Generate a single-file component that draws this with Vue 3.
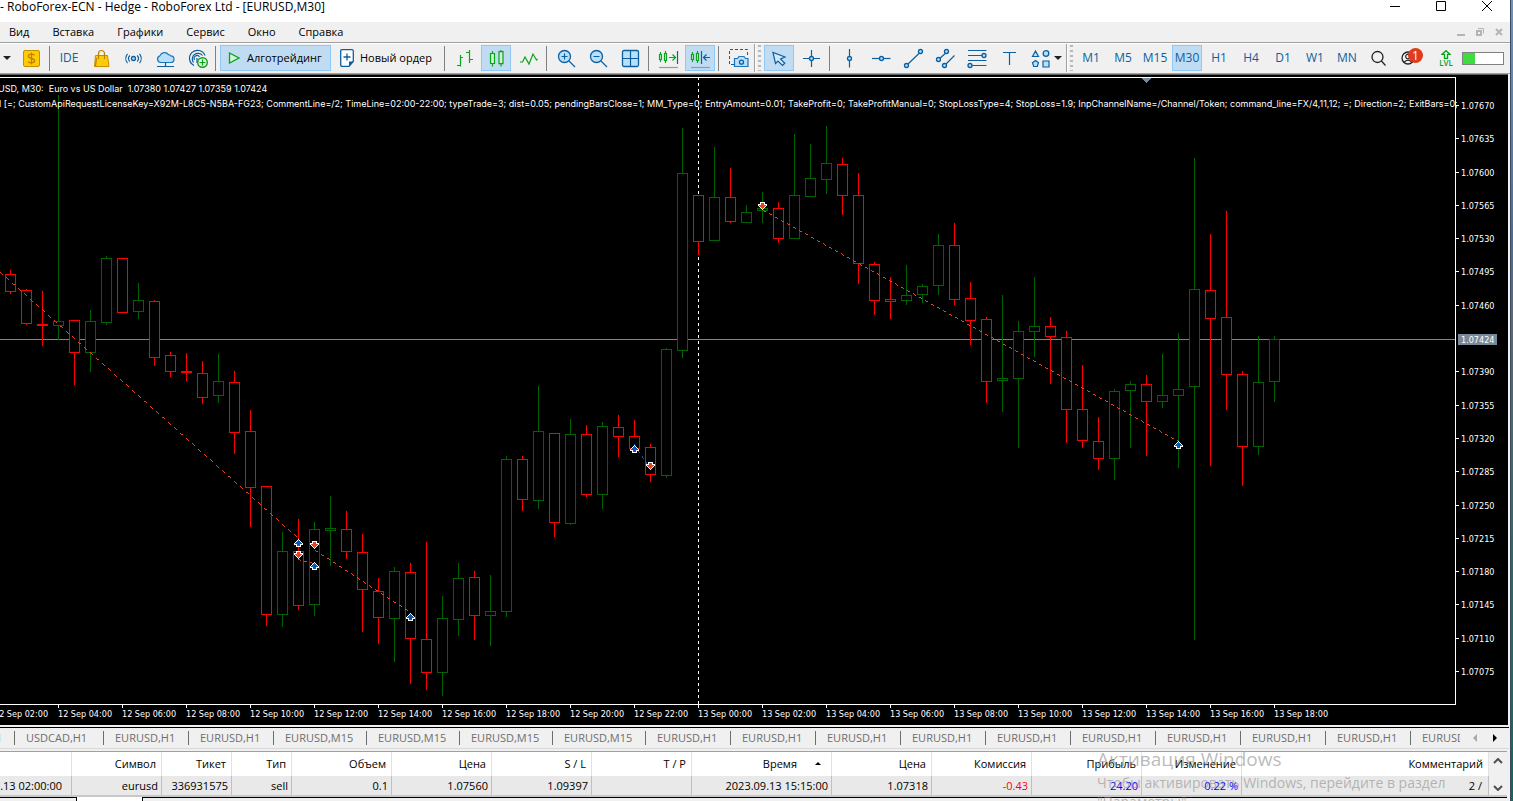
<script setup>
const menus = ['Вид', 'Вставка', 'Графики', 'Сервис', 'Окно', 'Справка']
const frames = ['M1', 'M5', 'M15', 'M30', 'H1', 'H4', 'D1', 'W1', 'MN']

const B = '#0d5f9e'
const L = '#b9e0fa'
const G = '#0aa31c'
const line = (d, c = B, f = 'none') => `<path d="${d}" fill="${f}" stroke="${c}" stroke-width="1.2"/>`
const dot = (x, y, r = 2) => `<circle cx="${x}" cy="${y}" r="${r}" fill="${L}" stroke="${B}" stroke-width="1.3"/>`

const icons = {
  dollar: `<rect x="4.5" y="4.5" width="16" height="16" rx="1.5" fill="#ffcb05" stroke="#c78f00"/><path d="M15.5 9.2C14.6 8.5 13.6 8.2 12.4 8.2c-1.8 0-3 .8-3 2 0 2.900 6.200 1.600 6.200 4.500 0 1.300-1.300 2.100-3.200 2.100-1.300 0-2.500-.4-3.300-1.100M12.500 6.500v12" fill="none" stroke="#b98200" stroke-width="1.300"/>`,
  bag: `<path d="M6.500 9.500H18.500L20 20.500H5.500z" fill="#ffcb05" stroke="#c78f00"/><path d="M9.500 13V7.500a3 3 0 0 1 6 0V13M7.500 12l-1 8" fill="none" stroke="#b98200" stroke-width="1.200"/>`,
  signal: dot(12.5, 12.5, 2) + line('M8.800 9.500a4.500 4.500 0 0 0 0 6M16.200 9.500a4.500 4.500 0 0 1 0 6M6.500 7.800a7.500 7.500 0 0 0 0 9.400M18.500 7.800a7.500 7.500 0 0 1 0 9.400'),
  cloud: line('M8 16.500H17.500a3.300 3.300 0 0 0 .3-6.600 3 3 0 0 0-2.300-1.300A5 5 0 0 0 6.800 9.900 3.400 3.400 0 0 0 8 16.500z', '#1b76b8', L) + line('M12.500 16.500v4M4 20.500h17'),
  cast: line('M9 19.500A8 8 0 1 1 20 9.500M8.500 16.500A5.300 5.300 0 1 1 17.500 9.500M9.500 14A2.800 2.800 0 1 1 14.500 11M12 12v5', B) + `<circle cx="17.500" cy="16.500" r="4.800" fill="#e4f8e4" stroke="${G}" stroke-width="1.400"/>` + line('M17.500 13.500v6M14.500 16.500h6', G),
  bars: line('M8.500 9v11.500M8.500 11.500h2.500M5 19.500h3.500M17.500 4v13M14 6.500h3.500M17.500 13.500h3.500', G),
  candles: line('M8.500 5v3M8.500 17v3.500M17 4v2M17 17.500v3', G) + line('M6.500 7.500h4v10h-4zM15 5.700h4v12h-4z', G, '#cdf3cf'),
  wave: line('M4 16h2.500L9 11l4 7 4-10 3.500 6 1-1', G),
  zoomIn: `<circle cx="10.500" cy="10.500" r="6" fill="${L}" stroke="${B}" stroke-width="1.300"/>` + line('M15 15l6 6M7.500 10.500h6M10.500 7.500v6'),
  zoomOut: `<circle cx="10.500" cy="10.500" r="6" fill="${L}" stroke="${B}" stroke-width="1.300"/>` + line('M15 15l6 6M7.500 10.500h6'),
  grid: `<rect x="4.500" y="4.500" width="16" height="16" rx="1.500" fill="${L}" stroke="${B}" stroke-width="1.300"/>` + line('M12.500 4.500v16M4.500 12.500h16'),
  shift: line('M4.500 6v10M9.500 5v12', G) + line('M3.500 8.500h2v5h-2zM8.500 7.500h2v7h-2z', G, '#cdf3cf') + line('M13 11.500h6M16.500 8.500l3 3-3 3', G) + line('M21.500 5v13') + line('M3 21.500h19', '#9a9a9a'),
  scroll: line('M4.500 6v10M9.500 5v12', G) + line('M3.500 8.500h2v5h-2zM8.500 7.500h2v7h-2z', G, '#cdf3cf') + line('M13.500 5v13') + line('M22 11.500h-6M18.500 8.500l-3 3 3 3') + line('M3 21.500h19', '#9a9a9a'),
  camera: `<path d="M8 18.500H3.500V3.500h18V10" fill="none" stroke="${B}" stroke-dasharray="3 2"/>` + line('M8.500 20.500v-8h3l1.500-2h5l1.500 2h2.500v8z', '#1b76b8', L) + dot(15.5, 16.2, 2),
  pointer: line('M6 6.500l2.500 11 2.500-2.500 4.500 4.500 2.300-2.300L13.500 13l4.500-2z', B, '#d4eafa'),
  cross: line('M12.500 4v17M4 12.500h17') + dot(12.5, 12.5),
  vline: line('M12.500 3v18.500') + dot(12.5, 12.5),
  hline: line('M3 12.500h18.500') + dot(12.5, 12.5),
  trend: line('M6 19L19.500 6') + dot(5.5, 19.5) + dot(19.5, 5.500),
  channel: line('M5.500 13.500l9-8M11.500 19.500l10-10') + dot(5.500, 13.500) + dot(13.500, 5.500) + dot(11.500, 19.500),
  fibo: line('M3 4.500h18.500M3 9.500h15M3 14.500h18.500M5 19.500h16.500') + dot(19, 9.500) + dot(5, 19.500),
  text: line('M6 6.500h13M12.500 6.500v12.500'),
  shapes: line('M7.500 5l3 5.500H4.500zM15 15h6v6h-6zM7.500 14.500l3 2.300-1.200 3.700H5.700L4.500 16.800z', B, L) + dot(18, 7.500, 2.800),
  search: `<circle cx="10.500" cy="11" r="5.500" fill="none" stroke="#222" stroke-width="1.300"/>` + line('M14.500 15l4 4.500', '#222'),
}

const groupA = [
  { sep: true },
  { label: 'IDE' },
  { icon: 'bag', name: 'Маркет' },
  { icon: 'signal', name: 'Сигналы' },
  { icon: 'cloud', name: 'VPS' },
  { icon: 'cast', name: 'Подписка' },
  { sep: true },
]
const groupB = [
  { sep: true },
  { icon: 'bars', name: 'Бары' },
  { icon: 'candles', name: 'Свечи', on: true },
  { icon: 'wave', name: 'Линия' },
  { sep: true },
  { icon: 'zoomIn', name: 'Увеличить' },
  { icon: 'zoomOut', name: 'Уменьшить' },
  { icon: 'grid', name: 'Упорядочить' },
  { sep: true },
  { icon: 'shift', name: 'Сдвиг' },
  { icon: 'scroll', name: 'Автопрокрутка', on: true },
  { sep: true },
  { icon: 'camera', name: 'Снимок' },
]
const groupC = [
  { icon: 'pointer', name: 'Курсор', on: true },
  { icon: 'cross', name: 'Перекрестие' },
  { sep: true },
  { icon: 'vline', name: 'Вертикальная линия' },
  { icon: 'hline', name: 'Горизонтальная линия' },
  { icon: 'trend', name: 'Трендовая линия' },
  { icon: 'channel', name: 'Канал' },
  { icon: 'fibo', name: 'Фибоначчи' },
  { icon: 'text', name: 'Текст' },
]

// high, body top, body bottom, low; u = rising, d = falling
const candleRows = `d270 274 292 294|d289 290 324 325|d291 324 326 346|u95 321 326 340|d320 320 353 385|u310 321 353 372|u256 258 323 325|d258 258 313 313|u283 300 312 319|d300 301 358 366|d352 355 372 377|d353 371 373 381|d361 373 398 404|u354 381 396 403|d371 382 433 454|d410 431 488 527|d486 486 615 626|u532 551 615 627|d519 551 606 610|u522 529 605 616|u496 528 531 566|d511 529 552 559|d534 552 590 632|d578 591 618 644|u567 571 619 662|d563 572 639 684|d542 639 673 690|u596 618 673 696|u563 578 620 636|d571 577 616 640|u575 611 616 646|u456 459 612 617|d456 459 500 511|u386 431 501 509|d433 433 523 537|u419 434 524 525|d425 434 495 497|u422 426 495 509|d415 427 437 457|d420 436 449 449|d444 447 475 482|u348 349 476 478|u128 173 351 358|d195 195 242 255|u147 197 241 241|d168 197 222 223|u205 212 223 223|u192 208 211 223|d202 208 239 243|u134 195 239 239|u144 178 197 197|u126 163 180 194|d158 164 196 215|d173 195 264 284|d262 264 301 315|d277 299 302 319|u265 295 301 305|u284 286 295 303|u234 245 286 295|d223 245 300 305|d282 298 321 345|d317 319 382 403|u295 378 381 412|u321 331 379 448|u277 326 332 357|d317 326 337 384|d331 337 410 443|d365 409 441 448|d417 441 459 470|u389 391 459 480|u381 384 391 448|d375 384 402 456|u354 395 402 408|u333 389 396 468|u158 289 387 640|d234 290 319 466|d211 317 375 410|d371 374 447 486|u336 382 447 455|u336 339 382 402`
const candles = candleRows.split('|').map((row, i) => {
  const [high, top, bottom, low] = row.slice(1).split(' ').map(Number)
  return { x: 10 + 16 * i, high, top, bottom, low, color: row[0] === 'u' ? '#006400' : '#ff0000' }
})

const dashes = (x0, y0, x1, y1) => {
  const dx = x1 - x0
  const dy = y1 - y0
  const n = Math.max(Math.abs(dx), Math.abs(dy))
  let d = ''
  for (let i = 0; i <= n; i++) {
    if (i % 6 < 3) d += `M${Math.round(x0 + (dx * i) / n)} ${Math.round(y0 + (dy * i) / n)}h1v1h-1z`
  }
  return d
}
const trades = [
  { d: dashes(0, 272, 298, 538), c: '#e8451e' },
  { d: dashes(298, 559, 314, 563), c: '#e8451e' },
  { d: dashes(315, 550, 410, 612), c: '#e8451e' },
  { d: dashes(634, 444, 650, 469), c: '#0a5cae' },
  { d: dashes(763, 210, 1178, 441), c: '#e8451e' },
]

const outer = [1, 3, 5, 7, 9, 9, 5, 5]
const inner = [0, 1, 3, 5, 7, 3, 3, 0]
const rows = (widths, x, y, down) =>
  (down ? [...widths].reverse() : widths)
    .map((w, i) => (w ? `M${x - (w - 1) / 2} ${y + i}h${w}v1h${-w}z` : ''))
    .join('')
const arrows = [
  [298, 539, 0], [298, 551, 1], [314, 541, 1], [314, 562, 0], [410, 613, 0],
  [634, 445, 0], [650, 462, 1], [762, 202, 1], [1178, 441, 0],
].map(([x, y, down]) => ({ o: rows(outer, x, y, down), i: rows(inner, x, y, down), c: down ? '#e8451e' : '#0a5cae' }))

const prices = Array.from({ length: 18 }, (_, i) => ({
  y: Math.round(105 + (i * 566) / 17),
  t: (1.0767 - i * 0.00035).toFixed(5),
})).filter((_, i) => i !== 7)

const times = Array.from({ length: 21 }, (_, i) => {
  const h = 2 + 2 * i
  return { x: -6 + 64 * i, t: `${12 + Math.floor(h / 24)} Sep ${String(h % 24).padStart(2, '0')}:00` }
})

const params = 'l [=; CustomApiRequestLicenseKey=X92M-L8C5-N5BA-FG23; CommentLine=/2; TimeLine=02:00-22:00; typeTrade=3; dist=0.05; pendingBarsClose=1; MM_Type=0; EntryAmount=0.01; TakeProfit=0; TakeProfitManual=0; StopLossType=4; StopLoss=1.9; InpChannelName=/Channel/Token; command_line=FX/4,11,12; =; Direction=2; ExitBars=0;'

const tabs = [
  'USDCAD,H1', 'EURUSD,H1', 'EURUSD,H1', 'EURUSD,M15', 'EURUSD,M15', 'EURUSD,M15', 'EURUSD,M15',
  'EURUSD,H1', 'EURUSD,H1', 'EURUSD,H1', 'EURUSD,H1', 'EURUSD,H1', 'EURUSD,H1', 'EURUSD,H1', 'EURUSD,H1', 'EURUSD,H1', 'EURUSD,H1',
].map((t) => ({ t, size: t.endsWith('M15') ? 'wide' : t.startsWith('USD') ? 'mid' : 'norm' }))

const columns = [
  { w: 'c72', h: '', v: '2023.09.13 02:00:00', k: 'open' },
  { w: 'c90', h: 'Символ', v: 'eurusd' },
  { w: 'c70', h: 'Тикет', v: '336931575' },
  { w: 'c60', h: 'Тип', v: 'sell' },
  { w: 'c100', h: 'Объем', v: '0.1' },
  { w: 'c100', h: 'Цена', v: '1.07560' },
  { w: 'c100', h: 'S / L', v: '1.09397' },
  { w: 'c100', h: 'T / P', v: '' },
  { w: 'c140', h: 'Время', v: '2023.09.13 15:15:00', sort: true },
  { w: 'c100', h: 'Цена', v: '1.07318' },
  { w: 'c100', h: 'Комиссия', v: '-0.43', k: 'red' },
  { w: 'c110', h: 'Прибыль', v: '24.20', k: 'blue' },
  { w: 'c100', h: 'Изменение', v: '0.22 %', k: 'blue' },
  { w: 'cauto', h: 'Комментарий', v: '2 /', k: 'last' },
]
</script>

<template>
  <div class="screen">
    <div class="window">
      <header class="titlebar">
        <h1>- RoboForex-ECN - Hedge - RoboForex Ltd - [EURUSD,M30]</h1>
        <div class="winctl">
          <button aria-label="Свернуть"><svg width="12" height="12"><path d="M1 6.500h10" /></svg></button>
          <button aria-label="Развернуть"><svg width="12" height="12"><path d="M1.500 1.500h9v9h-9z" /></svg></button>
          <button aria-label="Закрыть"><svg width="12" height="12"><path d="M1 1l10 10M11 1L1 11" /></svg></button>
        </div>
      </header>

      <nav class="menubar">
        <button v-for="m in menus" :key="m">{{ m }}</button>
        <div class="mdictl">
          <button aria-label="Свернуть график"><svg width="10" height="10"><path d="M1 8h8" stroke-width="2" /></svg></button>
          <button aria-label="Восстановить график"><svg width="10" height="10"><path d="M2 4h4v4H2z" stroke-width="2" /><path d="M3 1.500h5.500v5" /></svg></button>
          <button aria-label="Закрыть график"><svg width="10" height="10"><path d="M2 2l6 6M8 2L2 8" stroke-width="2" /></svg></button>
        </div>
      </nav>

      <div class="toolbar">
        <div class="group first">
          <button class="drop" aria-label="Меню"><i class="caret"></i></button>
          <button class="tool" aria-label="Депозит"><svg viewBox="0 0 24 24" v-html="icons.dollar"></svg></button>
          <template v-for="(t, i) in groupA" :key="i">
            <i v-if="t.sep" class="sep"></i>
            <button v-else-if="t.label" class="tool word">{{ t.label }}</button>
            <button v-else class="tool" :aria-label="t.name"><svg viewBox="0 0 24 24" v-html="icons[t.icon]"></svg></button>
          </template>
          <button class="algo on">
            <svg viewBox="0 0 12 12"><path d="M1.500 1l9.500 5-9.500 5z" fill="#d3f5d5" stroke="#0aa31c" stroke-width="1.300" /></svg>
            Алготрейдинг
          </button>
          <button class="order">
            <svg viewBox="0 0 14 18"><path d="M2 .7h10q1.300 0 1.300 1.300v10.500L9 17.300H2Q.7 17.300 .7 16V2Q.7 .7 2 .7z" fill="#fff" stroke="#0d5f9e" stroke-width="1.300" /><path d="M13.300 12.500H9v4.800z" fill="#0d5f9e" /><path d="M7 4.500v7M3.500 8h7" stroke="#0d5f9e" stroke-width="1.300" /></svg>
            Новый ордер
          </button>
          <template v-for="(t, i) in groupB" :key="i">
            <i v-if="t.sep" class="sep"></i>
            <button v-else class="tool" :class="{ on: t.on }" :aria-label="t.name"><svg viewBox="0 0 24 24" v-html="icons[t.icon]"></svg></button>
          </template>
        </div>
        <div class="group">
          <i class="grip"></i>
          <template v-for="(t, i) in groupC" :key="i">
            <i v-if="t.sep" class="sep"></i>
            <button v-else class="tool" :class="{ on: t.on }" :aria-label="t.name"><svg viewBox="0 0 24 24" v-html="icons[t.icon]"></svg></button>
          </template>
          <button class="shapes" aria-label="Фигуры"><svg viewBox="0 0 24 24" v-html="icons.shapes"></svg><i class="caret"></i></button>
        </div>
        <div class="group last">
          <i class="grip"></i>
          <button v-for="f in frames" :key="f" class="tool word" :class="{ on: f === 'M30' }">{{ f }}</button>
          <button class="tool" aria-label="Поиск"><svg viewBox="0 0 24 24" v-html="icons.search"></svg></button>
          <button class="user" aria-label="Уведомления">
            <svg viewBox="0 0 16 16"><circle cx="7" cy="8" r="6" fill="none" stroke="#222" stroke-width="1.300" /><circle cx="7" cy="6.500" r="2.300" fill="none" stroke="#222" stroke-width="1.200" /><path d="M3 12.500q4-4.500 8 0" fill="none" stroke="#222" stroke-width="1.200" /></svg>
            <span class="badge">1</span>
          </button>
          <button class="lvl"><svg viewBox="0 0 10 9"><path d="M5 .7L9 4.300H6.500V8.300h-3V4.300H1z" fill="#e4f8e4" stroke="#0aa31c" stroke-width="1.300" /></svg>LVL</button>
          <div class="load"><i></i></div>
        </div>
      </div>

      <main class="chart">
        <svg viewBox="0 75 1508 650" font-family="'DejaVu Sans Condensed', 'DejaVu Sans', sans-serif" font-size="9" fill="#fff">
          <defs><clipPath id="plot"><rect x="0" y="75" width="1457" height="650" /></clipPath></defs>
          <g shape-rendering="crispEdges">
            <path d="M0 77.500H1455.500V704.500H0" fill="none" stroke="#fff" />
            <path d="M0 339.500H1455" stroke="#778899" />
            <path d="M698.500 77V704" stroke="#fff" stroke-dasharray="3 3" />
            <path d="M1142 78h9v1h-1v1h-1v1h-1v1h-1v1h-1v-1h-1v-1h-1v-1h-1v-1h-1z" fill="#778899" />
            <g v-for="c in candles" :key="c.x">
              <rect :x="c.x" :y="c.high" width="1" :height="c.low - c.high" :fill="c.color" />
              <rect :x="c.x - 4.5" :y="c.top + 0.5" width="10" :height="c.bottom - c.top - 1" fill="#000" :stroke="c.color" />
            </g>
            <path v-for="(t, i) in trades" :key="i" :d="t.d" :fill="t.c" />
            <g v-for="(a, i) in arrows" :key="i">
              <path :d="a.o" fill="#fff" />
              <path :d="a.i" :fill="a.c" />
            </g>
            <rect v-for="p in prices" :key="p.y" x="1456" :y="p.y" width="3" height="1" />
            <rect v-for="t in times" :key="t.x" :x="t.x" y="705" width="1" height="3" />
            <rect x="1458" y="334" width="39" height="11" fill="#778899" />
          </g>
          <text v-for="p in prices" :key="p.t" x="1461" :y="p.y + 4">{{ p.t }}</text>
          <text x="1461" y="343">1.07424</text>
          <text v-for="t in times" :key="t.t" :x="t.x" y="717">{{ t.t }}</text>
          <g clip-path="url(#plot)" font-family="Inter, sans-serif">
            <text x="-2" y="92">USD, M30:&#160; Euro vs US Dollar&#160; 1.07380 1.07427 1.07359 1.07424</text>
            <text x="-1" y="107">{{ params }}</text>
          </g>
        </svg>
      </main>

      <div class="tabs">
        <div class="tablist">
          <button class="cut">1</button>
          <button v-for="(t, i) in tabs" :key="i" :class="t.size">{{ t.t }}</button>
        </div>
        <button class="nav off" aria-label="Назад"><i></i></button>
        <button class="nav" aria-label="Вперед"><i></i></button>
      </div>

      <section class="trades">
        <table>
          <colgroup><col v-for="(c, i) in columns" :key="i" :class="c.w" /></colgroup>
          <thead>
            <tr><th v-for="(c, i) in columns" :key="i" scope="col" :class="{ sorted: c.sort }">{{ c.h }}<i v-if="c.sort"></i></th></tr>
          </thead>
          <tbody>
            <tr><td v-for="(c, i) in columns" :key="i" :class="c.k"><div>{{ c.v }}</div></td></tr>
          </tbody>
        </table>
        <div class="scroll">
          <svg viewBox="0 0 10 6"><path d="M1 5l4-4 4 4" /></svg>
          <svg viewBox="0 0 10 6"><path d="M1 1l4 4 4-4" /></svg>
        </div>
      </section>
      <footer class="bottom"><i class="left"></i><i class="active"></i><i class="rest"></i></footer>
    </div>
    <div class="desktop"></div>
    <div class="watermark"><strong>Активация Windows</strong><span>Чтобы активировать Windows, перейдите в раздел<br />"Параметры".</span></div>
  </div>
</template>

<style>
body { overflow: hidden; }
</style>

<style scoped>
.screen {
  position: relative;
  display: flex;
  height: 100vh;
  overflow: hidden;
  font: 11px/16px "Open Sans", "Noto Sans", sans-serif;
  color: #000;
}
.window { flex: 1; min-width: 0; display: flex; flex-direction: column; background: #f0f0f0; }
.desktop { width: 2px; border-left: 1px solid #3c4c66; background: linear-gradient(#6b93bd, #4a6f93 30%, #5d6a70 40%, #2e6a60 70%, #0e6b58); }
button { font: inherit; color: inherit; border: 0; background: none; padding: 0; margin: 0; }
svg { display: block; }

.titlebar { display: flex; height: 22px; background: #fff; }
.titlebar h1 { flex: 1; margin: 0; font: 12px/14px "Open Sans", "Noto Sans", sans-serif; }
.winctl { display: flex; }
.winctl button { display: flex; justify-content: center; width: 46px; height: 12px; }
.winctl path { fill: none; stroke: #000; }

.menubar { display: flex; align-items: center; height: 20px; border-bottom: 1px solid #a0a0a0; }
.menubar > button { padding: 0 12px 0 11px; }
.menubar > button:first-child { padding-left: 9px; }
.mdictl { display: flex; gap: 9px; margin-left: auto; padding-right: 6px; }
.mdictl path { fill: none; stroke: #b4b4b4; }

.toolbar { display: flex; height: 28px; border-top: 1px solid #fff; border-bottom: 1px solid #a0a0a0; padding-bottom: 1px; }
.group { display: flex; align-items: center; gap: 2px; padding-right: 2px; border-left: 1px solid #fff; border-right: 1px solid #a0a0a0; }
.group.first { border-left: 0; padding-right: 1px; }
.group.last { flex: 1; border-right: 0; padding-right: 6px; }
.grip { width: 3px; height: 26px; margin: 0 1px 0 2px; background: repeating-linear-gradient(#b8b8b8 0 2px, #f0f0f0 2px 5px); }
.sep { width: 4px; height: 25px; background: linear-gradient(#808080, #808080) 1px 0 / 1px 100% no-repeat; }
.tool { display: flex; align-items: center; justify-content: center; width: 30px; height: 26px; flex: none; }
.tool svg, .shapes svg { width: 24px; height: 24px; }
.word { color: #0d5f9e; font-size: 12px; }
.on { background: #c0dcf3; box-shadow: inset 0 0 0 1px #90c8f6; }
.caret { border: 4px solid transparent; border-top-color: #222; border-bottom: 0; }
.drop { width: 14px; padding-left: 3px; display: flex; }
.algo, .order { display: flex; align-items: center; height: 26px; white-space: nowrap; flex: none; }
.algo { width: 111px; padding-left: 8px; gap: 7px; }
.algo svg { width: 12px; height: 12px; }
.order { width: 108px; padding-left: 7px; gap: 6px; }
.order svg { width: 14px; height: 18px; }
.shapes { display: flex; align-items: center; gap: 2px; padding-left: 2px; width: 38px; }
.user { position: relative; width: 30px; height: 26px; }
.user svg { width: 16px; height: 16px; margin-left: 5px; }
.badge { position: absolute; left: 12px; top: 3px; width: 15px; height: 15px; border-radius: 50%; background: #e03a1f; color: #fff; font-size: 12px; line-height: 15px; }
.lvl { width: 24px; margin-left: 6px; display: flex; flex-direction: column; align-items: center; font-size: 8px; line-height: 8px; font-weight: 600; color: #0aa31c; }
.lvl svg { width: 10px; height: 9px; }
.load { width: 42px; height: 13px; margin-left: auto; box-sizing: border-box; border: 1px solid #808080; background: #fff; }
.load i { display: block; width: 30%; height: 100%; background: #3fdc3f; }

.chart { background: #000; margin-right: 2px; border-top: 1px solid #606060; }
.chart svg { width: 100%; height: auto; }

.tabs { display: flex; align-items: center; height: 20px; margin: 2px 1px 0 0; border-top: 1px solid #000; border-bottom: 1px solid #d8d8d8; color: #6e6e6e; }
.tablist { flex: 1; display: flex; overflow: hidden; }
.tablist button { flex: none; box-sizing: border-box; height: 14px; line-height: 14px; padding-left: 11px; border-left: 1px solid #6e6e6e; text-align: left; }
.tablist .cut { width: 14px; padding: 0; border: 0; text-indent: -4px; }
.norm { width: 85px; }
.mid { width: 89px; }
.wide { width: 93px; }
.nav { width: 20px; display: flex; justify-content: center; }
.nav:last-child { margin-right: 4px; }
.nav i { border: 4px solid transparent; border-left-color: #000; border-right: 0; }
.nav.off { margin-left: 5px; }
.nav.off i { border: 4px solid transparent; border-right-color: #a8a8a8; border-left: 0; }

.trades { display: flex; margin: 2px 3px 0 0; border-top: 1px solid #a0a0a0; border-bottom: 2px solid #c8c8c8; background: #fff; }
table { flex: 1; width: 100%; table-layout: fixed; border-collapse: separate; border-spacing: 0; }
th, td { padding: 0 5px 0 0; border-right: 1px solid #e2e2e2; text-align: right; white-space: nowrap; overflow: hidden; font-weight: 400; }
th { height: 24px; }
td { height: 19px; padding-right: 3px; border-color: #c0c0c0; background: #e9e9e9; }
td.open { padding-right: 9px; }
td.open div { display: flex; justify-content: flex-end; overflow: hidden; }
td.last { padding-right: 6px; }
.sorted i { display: inline-block; margin: 0 5px 3px 18px; border: 3px solid transparent; border-bottom-color: #000; border-top: 0; }
.red { color: #f00; }
.blue { color: #00f; }
.c60 { width: 60px; }
.c70 { width: 70px; }
.c72 { width: 72px; }
.c90 { width: 90px; }
.c100 { width: 100px; }
.c110 { width: 110px; }
.c140 { width: 140px; }
.scroll { width: 18px; display: flex; flex-direction: column; justify-content: space-between; align-items: center; padding: 6px 0 4px; background: #f0f0f0; }
.scroll svg { width: 10px; height: 6px; }
.scroll path { fill: none; stroke: #505050; stroke-width: 2; }

.bottom { flex: 1; display: flex; margin-right: 3px; }
.left { width: 76px; border-top: 1px solid #000; }
.active { width: 65px; background: #fff; border: 1px solid #000; border-width: 0 1px; }
.rest { flex: 1; border-top: 1px solid #000; }

.watermark { position: absolute; left: 1097px; top: 746px; color: rgba(130, 130, 130, 0.55); white-space: nowrap; pointer-events: none; }
.watermark strong { display: block; font-size: 19px; line-height: 27px; font-weight: 400; }
.watermark span { display: block; font-size: 14px; line-height: 19px; }
</style>
